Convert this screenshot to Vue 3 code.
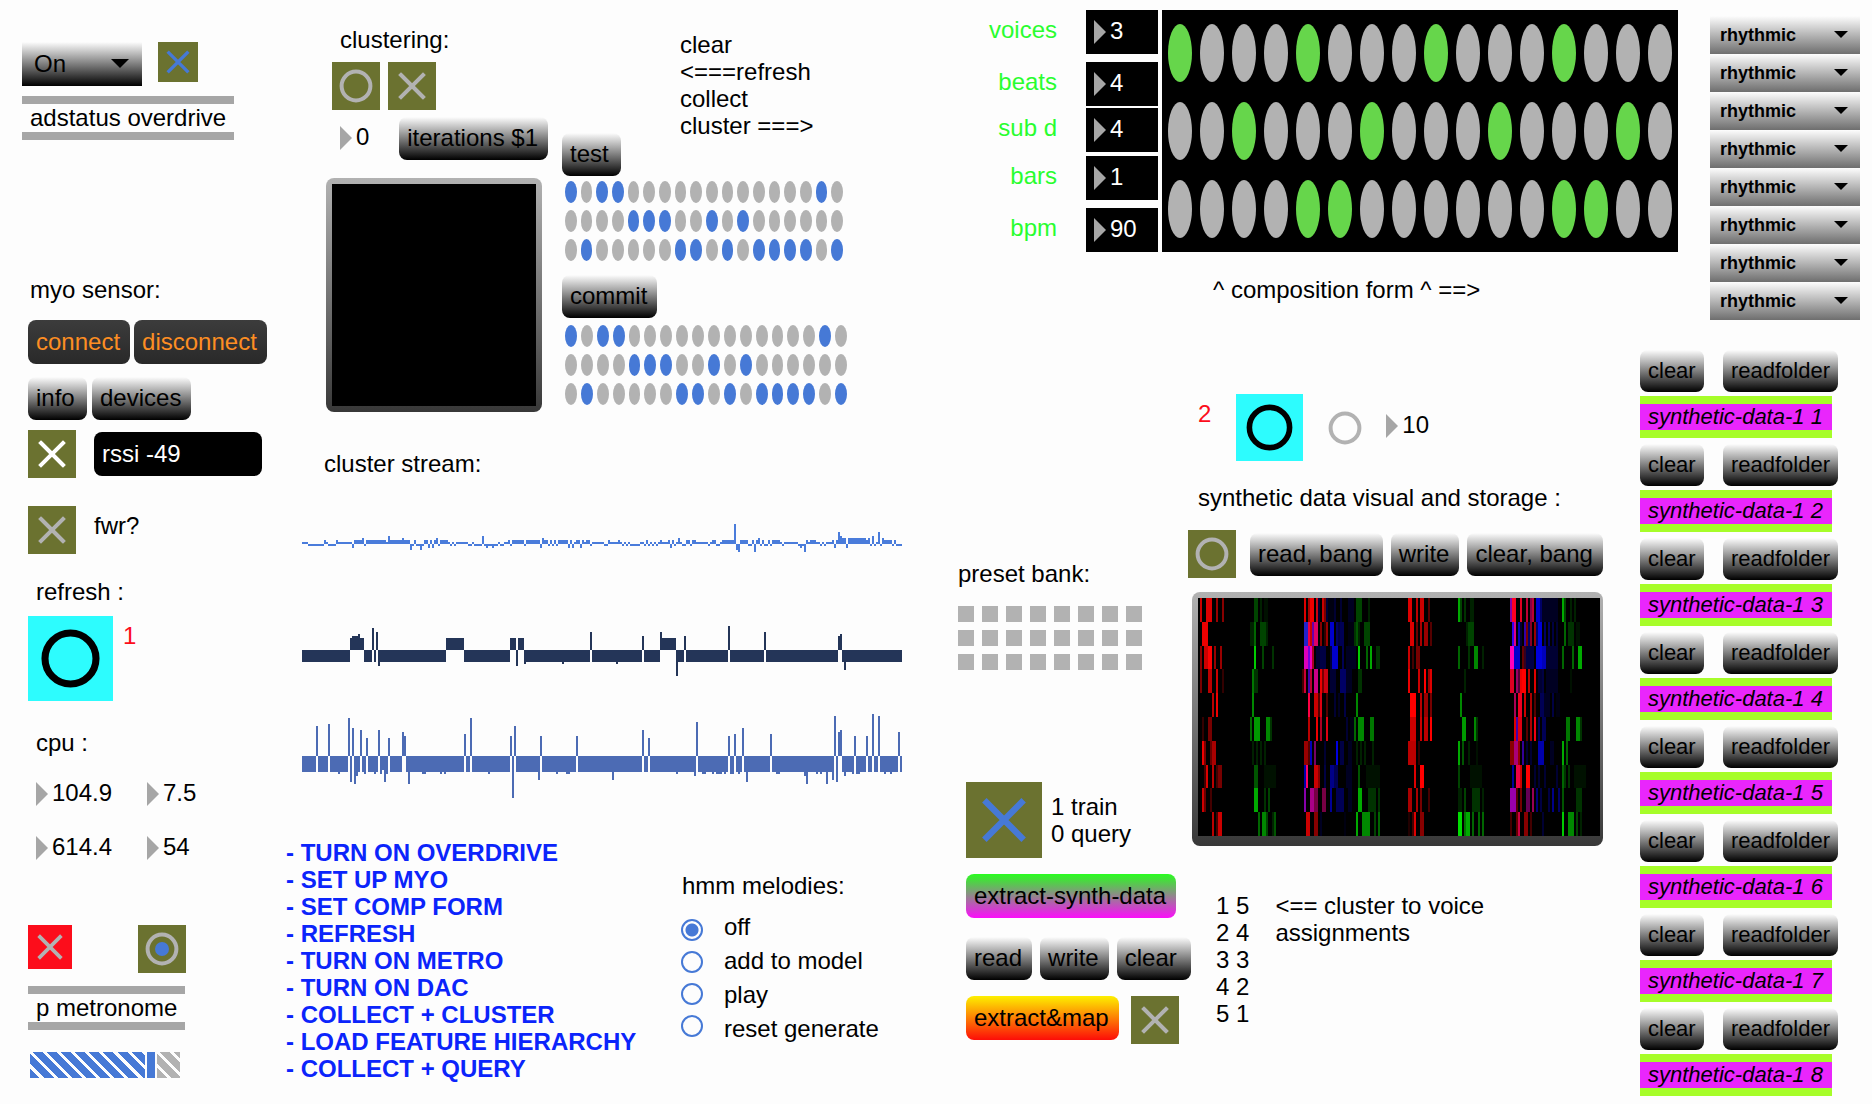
<script setup>
const MARK = { blue: '#4679d6', white: '#ffffff', gray: '#b2b2b2' }

const todo = [
  'TURN ON OVERDRIVE',
  'SET UP MYO',
  'SET COMP FORM',
  'REFRESH',
  'TURN ON METRO',
  'TURN ON DAC',
  'COLLECT + CLUSTER',
  'LOAD FEATURE HIERARCHY',
  'COLLECT + QUERY',
]

const cpu = ['104.9', '7.5', '614.4', '54']

const params = [
  { id: 'voices', value: 3 },
  { id: 'beats', value: 4 },
  { id: 'sub d', value: 4 },
  { id: 'bars', value: 1 },
  { id: 'bpm', value: 90 },
]

const melodies = ['off', 'add to model', 'play', 'reset generate']
const assignments = ['1 5', '2 4', '3 3', '4 2', '5 1']

const clusterPattern = [
  [0, 2, 3, 16],
  [4, 5, 6, 9, 11],
  [1, 7, 8, 10, 12, 13, 14, 15, 17],
]
const formPattern = [
  [0, 4, 8, 12],
  [2, 6, 10, 14],
  [4, 5, 12, 13],
]

function cells(pattern, columns) {
  return pattern.flatMap((on, r) =>
    Array.from({ length: columns }, (_, c) => ({
      key: `${r}-${c}`,
      on: on.includes(c),
      label: `row ${r + 1} column ${c + 1}`,
    })),
  )
}
const clusterCells = cells(clusterPattern, 18)
const formCells = cells(formPattern, 16)

// Streams: 300 bins, each bar grows from the zero axis. Runs are "count:value".
function fromRuns(text) {
  const out = []
  for (const run of text.trim().split(/\s+/)) {
    const [n, v] = run.split(':').map(Number)
    for (let i = 0; i < n; i++) out.push(v)
  }
  return out.slice(0, 300)
}
// Spikes over a constant level, as "bin:value".
function fromSpikes(level, text) {
  const out = Array(300).fill(level)
  for (const s of text.trim().split(/\s+/)) {
    const [i, v] = s.split(':').map(Number)
    out[i] = v
  }
  return out
}
function bars(values, axis) {
  return values
    .map((v, i) => {
      const h = Math.abs(v) * 2
      const y = v > 0 ? axis - h : axis
      return `M${i * 2} ${y}h2v${h}h-2z`
    })
    .join('')
}

const streamA = fromRuns(`
  3:1 8:-1 1:2 1:1 4:-1 1:2 7:1 1:-2 4:2 1:3 1:-1 10:2 1:1 1:4 6:2 1:3 3:2 1:-3 1:-1 1:2 2:-1 1:-3 1:-1 2:2
  1:-2 1:2 1:-2 1:2 1:3 1:-1 4:2 1:1 1:-1 1:1 1:-1 6:1 2:-1 1:1 4:-1 1:4 1:-1 1:-2 2:-1 1:-2 2:-1 1:1 2:-1
  2:1 1:2 1:-1 6:2 1:-1 7:2 1:-2 1:3 2:2 1:-1 1:2 1:-1 1:2 1:-1 5:2 1:-2 1:2 1:-2 1:1 2:2 1:-2 1:2 1:1 2:2
  1:-1 6:1 2:-1 1:2 4:1 1:2 1:1 1:-1 1:1 1:-1 1:1 5:-1 2:1 1:-1 1:2 1:-1 1:1 1:-1 1:1 1:-1 1:1 1:2 3:1 1:2
  1:-2 1:2 1:-1 1:1 1:3 1:1 2:-1 2:2 1:-1 2:2 6:1 1:-1 1:1 2:2 2:-1 1:1 6:2 1:10 1:-3 1:-4 4:2 2:-1 1:2
  1:-4 1:2 1:3 1:-1 1:2 2:-1 1:2 1:-1 4:2 1:1 1:-1 7:1 1:-1 1:-2 1:-1 1:-4 1:2 1:1 3:2 2:1 1:-1 1:1 1:-1
  3:1 1:2 1:-2 1:2 1:6 1:4 2:3 1:-2 9:3 1:2 1:3 1:-1 1:4 1:-1 1:1 1:6 1:-1 1:3 4:2 1:-1 1:2 4:-1`)

const streamB = fromRuns(`
  24:-6 1:6 3:7 1:8 2:6 4:-6 1:11 1:-6 1:9 1:-8 33:-6 9:6 23:-6 3:6 1:-8 3:6 1:-7 18:-6 1:-7 13:-6 1:9 12:-6
  1:-7 12:-6 1:7 8:-6 1:9 7:6 1:-13 3:-6 1:7 21:-6 1:12 17:-6 1:9 36:-6 1:7 1:8 1:-6 1:-10 28:-6`)

const streamC = fromSpikes(-8, `
  7:15 13:16 18:-9 23:19 24:-13 25:14 26:-14 27:-10 29:13 31:-9 32:9 36:-9 38:13 39:-9 40:-7 41:-13 42:-9
  43:9 50:12 51:10 53:-14 60:-9 61:-9 69:-9 71:-9 81:11 84:19 93:-9 104:10 105:-21 106:15 118:-12 119:10
  127:-9 132:-9 133:-9 137:10 155:-12 170:13 173:9 187:-9 196:-10 197:17 200:-9 201:-9 205:-9 207:-9
  208:-9 209:-9 211:-9 213:10 214:-9 215:-9 216:11 218:-9 220:14 222:-13 234:11 237:-9 238:-9 251:-10
  252:-14 257:-9 259:-9 262:-14 265:-12 266:20 267:-13 268:12 269:13 271:-10 275:-9 276:10 277:-9
  278:-9 282:10 285:21 288:20 291:-9 294:-9 298:12`)

const streams = [
  { name: 'a', height: 36, color: '#4a7cdb', path: bars(streamA, 24) },
  { name: 'b', height: 54, color: '#243558', path: bars(streamB, 26) },
  { name: 'c', height: 88, color: '#4c6bb4', path: bars(streamC, 44) },
]

// Synthetic data frames: ten rows of "column,width,colour" cells, 201 columns wide.
const frames = [
  '1,1,c00 4,3,d00 9,1,900 12,1,800 28,2,040 31,1,020 33,2,010 53,1,d00 55,1,a00 56,2,e00 59,1,c01 60,1,003 62,1,c00 63,1,700 64,1,003 65,4,001 68,1,003 71,1,003 75,3,002 79,3,040 85,1,020 105,2,d00 109,1,b00 111,2,c00 115,1,500 130,1,0a0 131,1,040 133,1,030 136,2,020 156,1,80a 157,2,f02 161,1,d02 164,1,b03 166,1,804 167,1,b03 169,2,00c 171,1,006 172,8,002 182,1,0a0 183,1,040 186,1,020 188,1,020',
  '2,3,e00 26,2,020 28,1,060 31,3,040 34,1,020 53,2,22c 55,1,e04 56,1,c00 57,1,60a 58,2,d06 61,1,800 63,1,300 64,1,900 66,2,00c 69,1,006 70,1,004 71,2,005 75,3,001 78,1,030 79,1,050 80,1,020 83,3,040 106,2,d00 109,1,600 111,1,a00 113,2,900 116,1,500 134,1,020 135,3,040 157,1,30e 158,1,d08 160,1,00b 161,1,003 163,1,30a 164,1,700 165,1,006 166,1,802 168,1,900 169,1,006 170,2,00d 173,1,006 175,1,006 177,1,004 179,1,003 183,1,060 185,3,030 189,2,010',
  '1,1,800 3,2,c00 5,2,f00 8,1,900 11,1,900 28,1,0c0 32,1,040 37,1,030 53,2,d0b 55,1,70d 56,1,e0b 57,1,a02 59,2,003 61,3,004 66,1,003 67,3,00c 72,1,005 74,5,002 80,1,0c0 84,1,060 86,1,0a0 89,2,030 105,1,c00 107,1,400 109,2,700 130,1,060 135,1,030 138,2,080 142,1,020 156,2,f0b 158,3,00c 162,1,600 163,1,302 164,4,004 169,3,00d 172,2,00b 174,6,003 182,1,060 187,1,060 190,2,0a0',
  '1,1,700 5,2,b00 9,1,c00 12,1,300 27,1,070 28,2,030 52,1,400 53,1,c03 55,1,40a 56,1,b03 58,2,c08 61,1,e00 62,1,700 63,2,c01 66,3,003 71,3,006 74,3,002 80,2,030 105,1,e00 110,1,c00 113,1,f00 115,1,900 116,1,d00 133,1,020 156,2,d02 159,1,906 160,1,503 161,1,e00 162,2,f00 165,1,b00 168,1,d00 170,2,003 172,1,004 174,6,002 186,1,010',
  '7,1,b00 9,1,e00 27,1,080 55,1,f04 58,2,c00 60,1,500 61,1,d01 64,1,500 68,1,003 70,1,002 73,1,004 79,1,080 106,3,f00 111,1,b00 113,2,900 116,1,700 131,1,080 158,1,a05 160,2,e02 163,1,c00 166,1,a00 168,1,500 171,2,005 173,3,002 177,1,004 179,2,001',
  '2,1,300 5,2,700 26,1,060 28,3,090 34,2,080 36,1,030 55,1,b00 59,1,e00 61,1,a02 64,1,d01 74,1,003 76,2,001 78,1,060 80,3,080 86,2,070 106,3,c00 111,1,c00 113,2,b00 116,1,f00 132,2,090 138,1,080 139,1,030 158,1,d00 159,1,40a 160,2,d01 164,1,500 166,1,a00 168,1,e01 170,1,005 172,2,005 184,2,070 189,2,080 191,1,030',
  '2,1,e00 3,1,700 6,1,600 7,2,a00 27,1,020 29,1,020 31,1,020 33,1,020 53,2,900 55,1,500 56,1,00b 58,1,706 63,1,003 69,1,00d 71,2,004 75,2,002 79,1,020 81,1,020 83,1,020 87,1,020 105,4,b00 110,1,300 130,1,0a0 132,1,050 135,1,020 139,1,010 156,2,800 158,2,a07 160,1,900 162,1,309 164,1,003 166,1,003 170,3,00a 176,2,002 182,1,0a0 184,1,060',
  '3,1,400 4,1,d00 7,1,b00 9,1,400 10,2,700 28,2,050 33,6,010 53,1,00a 54,1,f06 58,2,c00 60,1,800 63,1,004 66,2,008 68,2,005 74,3,002 80,1,050 84,7,010 108,1,d00 111,2,f00 130,1,040 136,6,010 157,1,009 159,2,e04 161,1,c00 164,2,f00 168,1,003 170,1,003 173,1,003 179,1,003 182,1,060 183,1,030 185,1,030 188,6,010',
  '2,1,c00 3,1,600 6,1,400 28,2,0a0 33,1,030 35,1,040 53,1,80a 56,2,a08 58,2,704 62,2,704 66,1,009 69,4,005 75,2,002 80,2,0a0 85,4,030 90,1,030 105,2,a00 109,1,a00 111,1,700 115,1,400 130,2,020 133,1,040 137,4,030 142,1,020 156,3,90a 159,1,500 161,1,700 164,2,605 167,1,905 169,1,007 171,1,004 175,1,004 177,1,008 180,1,006 182,1,050 189,3,030',
  '7,1,b00 9,1,400 10,2,c00 30,1,060 32,2,080 34,1,040 37,1,020 38,1,050 54,2,c00 58,2,800 61,1,002 73,1,001 79,1,0a0 82,4,080 88,1,040 90,1,060 105,1,200 107,1,400 108,1,d00 111,2,800 130,2,0d0 133,1,070 134,2,0a0 137,1,060 140,1,060 142,1,060 156,1,400 159,1,600 160,1,c04 163,2,800 166,1,400 172,1,003 182,1,0c0 185,3,080 189,1,040 191,1,020',
].flatMap((row, r) =>
  row.split(' ').map((cell) => {
    const [x, w, fill] = cell.split(',')
    return { key: `${r}-${x}`, x: x * 2, y: r * 24, w: w * 2, fill: `#${fill}` }
  }),
)
</script>

<template>
  <main class="patch">
    <section class="col-io">
      <div class="row audio">
        <span class="menu big">
          <select aria-label="audio"><option>On</option></select>
          <svg viewBox="0 0 18 9" aria-hidden="true"><path d="M0 0h18l-9 9z" /></svg>
        </span>
        <label class="toggle s40">
          <input type="checkbox" checked aria-label="audio on" />
          <svg viewBox="0 0 48 48" :stroke="MARK.blue"><path d="M13 13 35 35M35 13 13 35" /></svg>
        </label>
      </div>
      <div class="object overdrive">adstatus overdrive</div>

      <p class="note myo">myo sensor:</p>
      <div class="row connect">
        <button class="msg dark">connect</button>
        <button class="msg dark">disconnect</button>
      </div>
      <div class="row info">
        <button class="msg">info</button>
        <button class="msg">devices</button>
      </div>
      <div class="row rssi">
        <label class="toggle">
          <input type="checkbox" checked aria-label="rssi poll" />
          <svg viewBox="0 0 48 48" :stroke="MARK.white"><path d="M13 13 35 35M35 13 13 35" /></svg>
        </label>
        <button class="msg black">rssi -49</button>
      </div>
      <div class="row fwr">
        <label class="toggle">
          <input id="fwr" type="checkbox" />
          <svg viewBox="0 0 48 48" :stroke="MARK.gray"><path d="M13 13 35 35M35 13 13 35" /></svg>
        </label>
        <label for="fwr" class="note side">fwr?</label>
      </div>

      <p class="note refresh-title">refresh :</p>
      <div class="row refresh">
        <button class="bang cyan s85" aria-label="refresh">
          <svg viewBox="0 0 48 48" stroke="#000"><circle cx="24" cy="24" r="14.4" /></svg>
        </button>
        <span class="note side red">1</span>
      </div>

      <p class="note cpu-title">cpu :</p>
      <div class="cpu">
        <span v-for="v in cpu" :key="v" class="number">
          <input type="text" :value="v" :aria-label="'cpu ' + v" />
        </span>
      </div>

      <div class="metro-row">
        <label class="toggle s44 alert">
          <input type="checkbox" aria-label="metronome" />
          <svg viewBox="0 0 48 48" :stroke="MARK.gray"><path d="M13 13 35 35M35 13 13 35" /></svg>
        </label>
        <button class="bang" aria-label="tick">
          <svg viewBox="0 0 48 48" :stroke="MARK.gray">
            <circle cx="24" cy="24" r="14.4" />
            <circle cx="24" cy="24" r="7" :fill="MARK.blue" stroke="none" />
          </svg>
        </button>
      </div>
      <div class="object metronome">p metronome</div>
      <input class="slider" type="range" min="0" max="100" value="83" aria-label="metronome level" />
    </section>

    <section class="col-cluster">
      <div class="cluster">
        <div class="cluster-left">
          <p class="note">clustering:</p>
          <div class="row pair">
            <button class="bang" aria-label="cluster">
              <svg viewBox="0 0 48 48" :stroke="MARK.gray"><circle cx="24" cy="24" r="14.4" /></svg>
            </button>
            <label class="toggle">
              <input type="checkbox" aria-label="clustering" />
              <svg viewBox="0 0 48 48" :stroke="MARK.gray"><path d="M13 13 35 35M35 13 13 35" /></svg>
            </label>
          </div>
          <div class="row iter">
            <span class="number"><input type="text" value="0" aria-label="iterations" /></span>
            <button class="msg">iterations $1</button>
          </div>
          <div class="screen"><div class="void"></div></div>
        </div>
        <div class="cluster-right">
          <div class="row test">
            <button class="msg">test</button>
            <p class="note">clear<br />&lt;===refresh<br />collect<br />cluster ===&gt;</p>
          </div>
          <div class="dots test-dots">
            <input v-for="c in clusterCells" :key="c.key" type="checkbox" :checked="c.on" :aria-label="'test ' + c.label" />
          </div>
          <button class="msg commit">commit</button>
          <div class="dots commit-dots">
            <input v-for="c in clusterCells" :key="c.key" type="checkbox" :checked="c.on" :aria-label="'commit ' + c.label" />
          </div>
        </div>
      </div>

      <p class="note stream-title">cluster stream:</p>
      <div class="streams">
        <svg
          v-for="s in streams"
          :key="s.name"
          :class="'stream-' + s.name"
          :viewBox="`0 0 600 ${s.height}`"
          :height="s.height"
          preserveAspectRatio="none"
          shape-rendering="crispEdges"
        >
          <path :d="s.path" :fill="s.color" />
        </svg>
      </div>

      <div class="lower">
        <ul class="todo">
          <li v-for="t in todo" :key="t">- {{ t }}</li>
        </ul>
        <div class="melodies">
          <p class="note">hmm melodies:</p>
          <div class="choices">
            <div class="radios">
              <input v-for="(m, i) in melodies" :id="'hmm' + i" :key="m" type="radio" name="hmm" :checked="i === 0" />
            </div>
            <div class="labels">
              <label v-for="(m, i) in melodies" :key="m" :for="'hmm' + i">{{ m }}</label>
            </div>
          </div>
        </div>
      </div>
    </section>

    <section class="col-form">
      <div class="form">
        <div class="composition">
          <div class="params">
            <div v-for="p in params" :key="p.id" class="param">
              <label :for="p.id">{{ p.id }}</label>
              <span class="number inverse"><input :id="p.id" type="text" :value="p.value" /></span>
            </div>
          </div>
          <div class="form-grid">
            <input v-for="c in formCells" :key="c.key" type="checkbox" :checked="c.on" :aria-label="'form ' + c.label" />
          </div>
          <p class="note caption">^ composition form ^ ==&gt;</p>
        </div>
        <div class="menus">
          <span v-for="n in 8" :key="n" class="menu">
            <select :aria-label="'voice ' + n"><option>rhythmic</option></select>
            <svg viewBox="0 0 18 9" aria-hidden="true"><path d="M0 0h18l-9 9z" /></svg>
          </span>
        </div>
      </div>

      <div class="data">
        <div class="bank">
          <p class="note">preset bank:</p>
          <div class="presets">
            <button v-for="n in 24" :key="n" :aria-label="'preset ' + n"></button>
          </div>
          <div class="row train">
            <label class="toggle s76">
              <input id="train" type="checkbox" checked />
              <svg viewBox="0 0 48 48" :stroke="MARK.blue"><path d="M13 13 35 35M35 13 13 35" /></svg>
            </label>
            <label for="train" class="note">1 train<br />0 query</label>
          </div>
          <button class="msg synth">extract-synth-data</button>
          <div class="row files">
            <button class="msg">read</button>
            <button class="msg">write</button>
            <button class="msg roomy">clear</button>
          </div>
          <div class="row map">
            <button class="msg fire">extract&amp;map</button>
            <label class="toggle">
              <input type="checkbox" aria-label="extract and map" />
              <svg viewBox="0 0 48 48" :stroke="MARK.gray"><path d="M13 13 35 35M35 13 13 35" /></svg>
            </label>
          </div>
        </div>

        <div class="visual">
          <div class="row trigger">
            <span class="note side red">2</span>
            <button class="bang cyan s67" aria-label="trigger">
              <svg viewBox="0 0 48 48" stroke="#000"><circle cx="24" cy="24" r="14.4" /></svg>
            </button>
            <button class="bang bare" aria-label="step">
              <svg viewBox="0 0 48 48" :stroke="MARK.gray"><circle cx="24" cy="24" r="14.4" /></svg>
            </button>
            <span class="number"><input type="text" value="10" aria-label="rate" /></span>
          </div>
          <p class="note visual-title">synthetic data visual and storage :</p>
          <div class="row storage">
            <button class="bang" aria-label="storage">
              <svg viewBox="0 0 48 48" :stroke="MARK.gray"><circle cx="24" cy="24" r="14.4" /></svg>
            </button>
            <div class="row buttons">
              <button class="msg">read, bang</button>
              <button class="msg">write</button>
              <button class="msg">clear, bang</button>
            </div>
          </div>
          <div class="screen frames">
            <svg viewBox="0 0 402 240" preserveAspectRatio="none" shape-rendering="crispEdges">
              <rect width="402" height="240" fill="#000" />
              <rect v-for="f in frames" :key="f.key" :x="f.x" :y="f.y" :width="f.w" height="24" :fill="f.fill" />
            </svg>
          </div>
          <div class="row assign">
            <ul class="note">
              <li v-for="a in assignments" :key="a">{{ a }}</li>
            </ul>
            <p class="note">&lt;== cluster to voice<br />assignments</p>
          </div>
        </div>

        <div class="strips">
          <div v-for="n in 8" :key="n" class="strip">
            <div class="strip-buttons">
              <button class="msg small">clear</button>
              <button class="msg small">readfolder</button>
            </div>
            <div class="tag">synthetic-data-1 {{ n }}</div>
          </div>
        </div>
      </div>
    </section>
  </main>
</template>

<style>
body {
  margin: 0;
  background: #fdfdfd;
}
</style>

<style scoped>
.patch,
.patch * {
  box-sizing: border-box;
}
.patch {
  display: grid;
  grid-template-columns: 286fr 664fr 922fr;
  padding-bottom: 4px;
  font: 24px/27px "Liberation Sans", Arial, sans-serif;
  color: #000;
}
p,
ul {
  margin: 0;
  padding: 0;
  list-style: none;
}
button,
input,
select {
  margin: 0;
  padding: 0;
  border: 0;
  font: inherit;
  color: inherit;
  appearance: none;
}
.row {
  display: flex;
  align-items: flex-start;
}
.note {
  white-space: nowrap;
}
.side {
  margin-top: 6px;
}
.red {
  color: #fc0d1b;
}

/* message buttons */
.msg {
  flex: none;
  height: 43px;
  min-width: 59px;
  padding: 0 10px 2px 8px;
  border-radius: 8px;
  background: linear-gradient(#fdfdfd, #000);
  text-align: left;
  white-space: nowrap;
}
.msg.dark {
  height: 44px;
  background: linear-gradient(#3c3c3c, #292929);
  color: #fd8e23;
}
.msg.black {
  width: 168px;
  height: 44px;
  background: #000;
  color: #fff;
}
.msg.synth {
  height: 44px;
  background: linear-gradient(#29fd1f, #fc0dfb);
}
.msg.fire {
  height: 44px;
  background: linear-gradient(#fdf000, #fd0d08);
}
.msg.roomy {
  padding-right: 14px;
}
.msg.small {
  height: 42px;
  padding-right: 8px;
  font-size: 22px;
}

/* toggles and bangs */
.toggle,
.bang {
  display: block;
  flex: none;
  width: 48px;
  height: 48px;
  background: #6b7230;
}
.toggle input {
  position: absolute;
  opacity: 0;
}
.toggle svg,
.bang svg {
  display: block;
  width: 100%;
  height: 100%;
  fill: none;
  stroke-width: 4;
  stroke-linecap: square;
}
.s40 {
  width: 40px;
  height: 40px;
}
.s44 {
  width: 44px;
  height: 44px;
}
.s67 {
  width: 67px;
  height: 67px;
}
.s76 {
  width: 76px;
  height: 76px;
}
.s85 {
  width: 85px;
  height: 85px;
}
.cyan {
  background: #2dfcfe;
}
.alert {
  background: #fc0d1b;
}
.bare {
  background: none;
}

/* number boxes */
.number {
  display: flex;
  align-items: center;
  gap: 4px;
  height: 44px;
  padding-left: 8px;
}
.number::before {
  content: "";
  flex: none;
  border: solid transparent;
  border-width: 12px 0 12px 12px;
  border-left-color: #a6a6a6;
}
.number input {
  width: 100%;
  min-width: 0;
  height: 30px;
  padding-bottom: 2px;
  background: none;
}
.inverse {
  width: 72px;
  background: #000;
  color: #fff;
}

/* drop-down menus */
.menu {
  position: relative;
  display: block;
}
.menu select {
  display: block;
  width: 100%;
  height: 38px;
  padding-left: 10px;
  border-radius: 0;
  background: linear-gradient(#fdfdfd, #6e6e6e);
  font-size: 18px;
  font-weight: bold;
}
.menu svg {
  position: absolute;
  right: 12px;
  top: 15px;
  width: 14px;
  height: 7px;
  pointer-events: none;
}
.menu.big {
  width: 120px;
}
.menu.big select {
  height: 44px;
  padding: 0 0 2px 12px;
  background: linear-gradient(#fdfdfd, #000);
  font-size: 24px;
  font-weight: normal;
}
.menu.big svg {
  right: 13px;
  top: 17px;
  width: 18px;
  height: 9px;
}

.object {
  width: fit-content;
  padding: 0 8px;
  border: solid #a6a6a6;
  border-width: 8px 0;
  line-height: 28px;
  white-space: nowrap;
}

/* gray bezel around a display */
.screen {
  padding: 6px;
  border-radius: 8px;
  background: linear-gradient(#b2b2b2, #383838);
}

/* left column */
.col-io {
  display: flex;
  flex-direction: column;
  align-items: flex-start;
  padding: 42px 0 0 28px;
}
.audio {
  gap: 16px;
  margin-left: -6px;
}
.overdrive {
  margin: 10px 0 0 -6px;
}
.myo {
  margin: 136px 0 0 2px;
}
.connect {
  gap: 4px;
  margin-top: 17px;
}
.info {
  gap: 5px;
  margin-top: 13px;
}
.rssi {
  align-items: center;
  gap: 18px;
  margin-top: 10px;
}
.fwr {
  gap: 18px;
  margin-top: 28px;
}
.refresh-title {
  margin: 24px 0 0 8px;
}
.refresh {
  gap: 10px;
  margin-top: 11px;
}
.cpu-title {
  margin: 28px 0 0 8px;
}
.cpu {
  display: grid;
  grid-template-columns: 111px 111px;
  row-gap: 10px;
  margin-top: 16px;
}
.metro-row {
  display: flex;
  justify-content: space-between;
  width: 158px;
  margin-top: 55px;
}
.metronome {
  margin-top: 13px;
}
.slider {
  width: 150px;
  height: 26px;
  margin: 22px 0 0 2px;
  background:
    repeating-linear-gradient(45deg, transparent 0 7px, #fdfdfd 7px 10px),
    linear-gradient(90deg, #4679d6 0 120px, #b2b2b2 120px);
}
.slider::-webkit-slider-thumb {
  appearance: none;
  width: 12px;
  height: 26px;
  border: solid #fdfdfd;
  border-width: 0 2px;
  background: #4679d6;
}

/* clustering column */
.col-cluster {
  display: flex;
  flex-direction: column;
}
.cluster {
  display: flex;
  gap: 14px;
  padding: 26px 0 0 40px;
}
.cluster-left {
  width: 222px;
}
.cluster-left .note {
  padding-left: 14px;
}
.pair {
  gap: 8px;
  margin: 9px 0 0 6px;
}
.iter {
  align-items: flex-end;
  margin: 6px 0 0 6px;
}
.iter .number {
  width: 68px;
}
.cluster-left .screen {
  width: 216px;
  margin-top: 18px;
}
.void {
  height: 222px;
  background: #000;
}
.cluster-right {
  flex: 1;
  padding-top: 5px;
}
.test {
  gap: 59px;
}
.test .msg {
  margin-top: 102px;
}
.dots {
  display: grid;
  grid-template-columns: repeat(18, 1fr);
  gap: 7px 4px;
  width: 278px;
  margin: 5px 0 0 3px;
}
.dots input {
  height: 22px;
  border-radius: 50%;
  background: #b2b2b2;
}
.dots input:checked {
  background: #4679d6;
}
.commit {
  display: block;
  margin-top: 14px;
}
.commit-dots {
  width: 282px;
  margin-top: 7px;
}
.stream-title {
  margin: 38px 0 0 38px;
}
.streams {
  display: flex;
  flex-direction: column;
  margin: 43px 48px 0 16px;
}
.streams svg {
  display: block;
  width: 100%;
}
.stream-b {
  margin-top: 68px;
}
.stream-c {
  margin-top: 34px;
}
.lower {
  display: flex;
  justify-content: space-between;
  padding-right: 72px;
  margin-top: 39px;
}
.todo {
  font-weight: bold;
  color: #0b24fb;
  white-space: nowrap;
}
.melodies {
  width: 197px;
  padding-top: 33px;
}
.melodies .note {
  padding-left: 1px;
}
.choices {
  display: flex;
  gap: 21px;
  margin-top: 11px;
}
.radios {
  display: flex;
  flex-direction: column;
  gap: 10px;
  padding-top: 9px;
}
.radios input {
  width: 22px;
  height: 22px;
  border: 2px solid #4679d6;
  border-radius: 50%;
}
.radios input:checked {
  background: radial-gradient(circle, #4679d6 6px, transparent 7px);
}
.labels label {
  display: block;
  line-height: 34px;
  white-space: nowrap;
}

/* composition form */
.form {
  display: flex;
  align-items: flex-start;
  justify-content: space-between;
  gap: 32px;
  padding: 10px 12px 0 32px;
}
.composition {
  display: grid;
  flex: 1;
  grid-template-columns: 176px 1fr;
  column-gap: 4px;
}
.params {
  display: grid;
  grid-template-rows: 52px 46px 48px 52px 44px;
}
.param {
  display: flex;
  align-items: flex-start;
  justify-content: flex-end;
  gap: 29px;
}
.param label {
  padding-top: 6px;
  color: #29fd2f;
}
.form-grid {
  display: grid;
  grid-template-columns: repeat(16, 1fr);
  gap: 20px 8px;
  padding: 14px 6px;
  background: #000;
}
.form-grid input {
  height: 58px;
  border-radius: 50%;
  background: #b2b2b2;
}
.form-grid input:checked {
  background: #66d64b;
}
.caption {
  grid-column: 2;
  margin: 24px 0 0 51px;
}
.menus {
  width: 150px;
  padding-top: 6px;
}

/* synthetic data */
.data {
  display: flex;
  align-items: flex-start;
  padding-right: 34px;
  margin-top: 30px;
}
.bank {
  flex: none;
  width: 238px;
  padding: 210px 0 0 16px;
}
.bank > .note,
.presets {
  margin-left: -8px;
}
.presets {
  display: grid;
  grid-template-columns: repeat(8, 16px);
  gap: 8px;
  margin-top: 19px;
}
.presets button {
  height: 16px;
  background: #b2b2b2;
}
.train {
  align-items: center;
  gap: 9px;
  margin-top: 112px;
}
.synth {
  margin-top: 16px;
}
.files {
  gap: 8px;
  margin-top: 19px;
}
.map {
  gap: 12px;
  margin-top: 16px;
}
.visual {
  flex: 1;
  padding-top: 44px;
}
.trigger {
  padding-left: 10px;
}
.trigger .cyan {
  margin: 0 18px 0 25px;
}
.trigger .bare,
.trigger .number {
  margin-top: 10px;
}
.trigger .number {
  width: 90px;
  margin-left: 9px;
}
.visual-title {
  margin: 23px 0 0 10px;
}
.storage {
  align-items: center;
  gap: 14px;
  margin-top: 19px;
}
.buttons {
  gap: 8px;
}
.frames {
  padding: 6px 3px 10px 6px;
  margin: 14px 37px 0 4px;
}
.frames svg {
  display: block;
  width: 100%;
  height: 238px;
}
.assign {
  gap: 26px;
  margin: 46px 0 0 28px;
}
.strips {
  display: flex;
  flex: none;
  flex-direction: column;
  gap: 6px;
  width: 198px;
}
.strip-buttons {
  display: flex;
  justify-content: space-between;
}
.tag {
  width: 192px;
  margin-top: 4px;
  padding-left: 8px;
  border: solid #a6fd29;
  border-width: 8px 0;
  background: #e926fc;
  font-size: 22px;
  font-style: italic;
  line-height: 26px;
  white-space: nowrap;
}
</style>
